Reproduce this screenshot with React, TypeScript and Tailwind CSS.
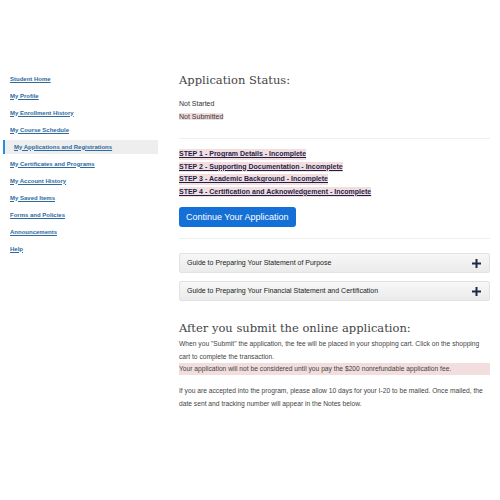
import React from "react";

const navItems = [
  "Student Home",
  "My Profile",
  "My Enrollment History",
  "My Course Schedule",
  "My Applications and Registrations",
  "My Certificates and Programs",
  "My Account History",
  "My Saved Items",
  "Forms and Policies",
  "Announcements",
  "Help",
];

const steps = [
  "STEP 1 - Program Details - Incomplete",
  "STEP 2 - Supporting Documentation - Incomplete",
  "STEP 3 - Academic Background - Incomplete",
  "STEP 4 - Certification and Acknowledgement - Incomplete",
];

const guides = [
  "Guide to Preparing Your Statement of Purpose",
  "Guide to Preparing Your Financial Statement and Certification",
];

function Plus() {
  return (
    <svg width="9" height="9" viewBox="0 0 9 9">
      <path d="M3.5 0h2v3.5H9v2H5.5V9h-2V5.5H0v-2h3.5z" fill="#1c2a4a" />
    </svg>
  );
}

export default function App() {
  return (
    <div className="w-[500px] h-[500px] bg-white flex font-['Liberation_Sans',Arial,sans-serif] text-[#333]">
      {/* sidebar */}
      <div className="w-[179px] pt-[72px] shrink-0">
        <ul className="flex flex-col">
          {navItems.map((item) => {
            const active = item === "My Applications and Registrations";
            return (
              <li
                key={item}
                className={
                  active
                    ? "h-[14px] mr-[21px] ml-[3px] pl-[9px] flex items-center bg-[#eeeeee] border-l-2 border-[#2a8be0] mb-[3px]"
                    : "h-[14px] pl-[10px] flex items-center mb-[3px]"
                }
              >
                <a className="text-[6px] font-bold text-[#2d6aa0] underline">{item}</a>
              </li>
            );
          })}
        </ul>
      </div>

      {/* main */}
      <div className="w-[311px] pt-[68px]">
        <h1 className="font-['DejaVu_Serif',serif] text-[11.5px] leading-[24px] text-[#444]">
          Application Status:
        </h1>
        <div className="mt-[5px] text-[7px] leading-[13px]">
          <div>Not Started</div>
          <div>
            <span className="bg-[#f2dede]">Not Submitted</span>
          </div>
        </div>
        <div className="mt-[15px] border-t border-[#eeeeee]" />
        <div className="mt-[9px] flex flex-col">
          {steps.map((s) => (
            <div key={s} className="h-[12.5px] flex items-center">
              <a className="text-[7px] font-bold text-[#1f1f4a] underline bg-[#f2dede]">{s}</a>
            </div>
          ))}
        </div>
        <button className="mt-[9px] h-[20px] px-[7px] rounded-[3px] bg-[#1470d6] text-white text-[9px] leading-none">
          Continue Your Application
        </button>
        <div className="mt-[11px] border-t border-[#eeeeee]" />
        <div className="mt-[14px] flex flex-col gap-[8px]">
          {guides.map((g) => (
            <div
              key={g}
              className="h-[20px] flex items-center justify-between pl-[7px] pr-[8px] border border-[#e2e2e2] rounded-[2px] bg-gradient-to-b from-[#f7f7f7] to-[#ebebeb]"
            >
              <span className="text-[7px] text-[#222]">{g}</span>
              <Plus />
            </div>
          ))}
        </div>
        <h2 className="mt-[17px] font-['DejaVu_Serif',serif] text-[11.5px] leading-[20px] text-[#444]">
          After you submit the online application:
        </h2>
        <p className="text-[6.7px] leading-[12.5px] text-[#444]">
          When you "Submit" the application, the fee will be placed in your shopping cart. Click on the shopping cart to
          complete the transaction.
        </p>
        <p className="h-[12px] flex items-center bg-[#f2dede] text-[6.7px] text-[#444]">
          Your application will not be considered until you pay the $200 nonrefundable application fee.
        </p>
        <p className="mt-[10px] text-[6.7px] leading-[12.5px] text-[#444]">
          If you are accepted into the program, please allow 10 days for your I-20 to be mailed. Once mailed, the date
          sent and tracking number will appear in the Notes below.
        </p>
      </div>
    </div>
  );
}
